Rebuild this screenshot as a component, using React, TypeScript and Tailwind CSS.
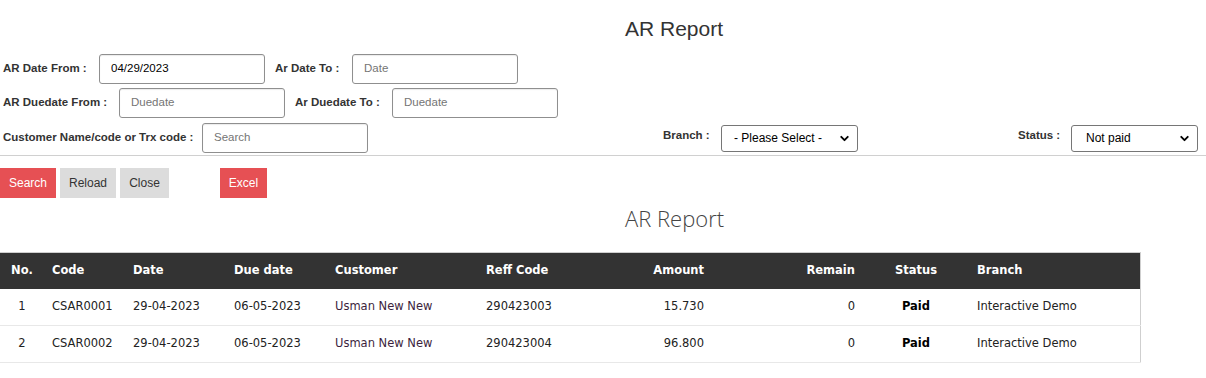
import { ChevronDown } from 'lucide-react';

const rows = [
    { no: 1, code: 'CSAR0001', date: '29-04-2023', due: '06-05-2023', customer: 'Usman New New', reff: '290423003', amount: '15.730', remain: '0', status: 'Paid', branch: 'Interactive Demo' },
    { no: 2, code: 'CSAR0002', date: '29-04-2023', due: '06-05-2023', customer: 'Usman New New', reff: '290423004', amount: '96.800', remain: '0', status: 'Paid', branch: 'Interactive Demo' },
];

function Label({ text, w }: { text: string; w: string }) {
    return <span className={`${w} shrink-0 text-[11.5px] font-bold text-[#333]`}>{text}</span>;
}

function Field({ value, placeholder }: { value?: string; placeholder?: string }) {
    return (
        <div className="w-[166px] h-[30px] shrink-0 rounded-[3px] border border-[#8f8f8f] bg-white px-[11px] flex items-center text-[11.5px] shadow-[inset_0_1px_1px_rgba(0,0,0,0.08)]">
            {value ? <span className="text-black">{value}</span> : <span className="text-[#757575]">{placeholder}</span>}
        </div>
    );
}

function Select({ value, w, center }: { value: string; w: string; center?: boolean }) {
    return (
        <div className={`${w} h-[27px] shrink-0 rounded-[3px] border border-[#767676] bg-white flex items-center pr-[6px] text-[12px] text-black`}>
            <span className={center ? 'flex-1 pl-[12px]' : 'flex-1 pl-[14px]'}>{value}</span>
            <ChevronDown size={13} strokeWidth={3.5} className="text-black" />
        </div>
    );
}

export default function App() {
    return (
        <div className="w-[1206px] h-[378px] bg-white overflow-hidden font-['Liberation_Sans',Arial,sans-serif]">
            <div className="pt-[17px] pl-[625px] h-[54px] text-[21px] leading-[24px] text-[#333]">AR Report</div>

            {/* Filters */}
            <div className="flex flex-col pl-[3px]">
                <div className="flex items-center h-[30px]">
                    <Label text="AR Date From :" w="w-[96px]" />
                    <Field value="04/29/2023" />
                    <span className="w-[10px]" />
                    <Label text="Ar Date To :" w="w-[77px]" />
                    <Field placeholder="Date" />
                </div>
                <div className="flex items-center h-[30px] mt-[4px]">
                    <Label text="AR Duedate From :" w="w-[116px]" />
                    <Field placeholder="Duedate" />
                    <span className="w-[10px]" />
                    <Label text="Ar Duedate To :" w="w-[97px]" />
                    <Field placeholder="Duedate" />
                </div>
                <div className="flex items-center h-[30px] mt-[5px]">
                    <Label text="Customer Name/code or Trx code :" w="w-[199px]" />
                    <Field placeholder="Search" />
                    <span className="w-[295px]" />
                    <span className="w-[58px] text-[11.5px] font-bold text-[#333] -mt-[4px]">Branch :</span>
                    <Select value="- Please Select -" w="w-[137px]" center />
                    <span className="w-[160px]" />
                    <span className="w-[53px] text-[11.5px] font-bold text-[#333] -mt-[4px]">Status :</span>
                    <Select value="Not paid" w="w-[127px]" />
                </div>
            </div>

            <div className="mt-[2px] border-t border-[#d0d0d0]" />

            {/* Actions */}
            <div className="flex mt-[12px] text-[12px]">
                <button className="h-[30px] w-[56px] bg-[#e65054] text-white">Search</button>
                <button className="h-[30px] w-[56px] ml-[4px] bg-[#dcdcdc] text-[#333]">Reload</button>
                <button className="h-[30px] w-[49px] ml-[4px] bg-[#dcdcdc] text-[#333]">Close</button>
                <button className="h-[30px] w-[47px] ml-[51px] bg-[#e65054] text-white">Excel</button>
            </div>

            <div className="pl-[625px] mt-[9px] h-[45px] pt-[1px] text-[22px] leading-[20px] font-light text-[#444] font-['Open_Sans',sans-serif]">AR Report</div>

            {/* Table */}
            <table className="w-[1140px] table-fixed border-collapse border-t border-r border-[#cfcfcf] font-['DejaVu_Sans',Verdana,sans-serif] text-[11.5px]">
                <colgroup>
                    <col className="w-[42px]" />
                    <col className="w-[81px]" />
                    <col className="w-[101px]" />
                    <col className="w-[101px]" />
                    <col className="w-[151px]" />
                    <col className="w-[110px]" />
                    <col className="w-[128px]" />
                    <col className="w-[151px]" />
                    <col className="w-[102px]" />
                    <col className="w-[173px]" />
                </colgroup>
                <thead>
                    <tr className="h-[36px] bg-[#333] text-white font-bold">
                        <th className="text-center pl-[2px]">No.</th>
                        <th className="text-left px-[10px]">Code</th>
                        <th className="text-left px-[10px]">Date</th>
                        <th className="text-left px-[10px]">Due date</th>
                        <th className="text-left px-[10px]">Customer</th>
                        <th className="text-left px-[10px]">Reff Code</th>
                        <th className="text-right px-[10px]">Amount</th>
                        <th className="text-right px-[10px]">Remain</th>
                        <th className="text-center px-[10px]">Status</th>
                        <th className="text-left px-[10px]">Branch</th>
                    </tr>
                </thead>
                <tbody className="text-[#222]">
                    {rows.map((r) => (
                        <tr key={r.no} className="h-[37px] border-b border-[#e8e8e8]">
                            <td className="text-center pl-[2px]">{r.no}</td>
                            <td className="px-[10px]">{r.code}</td>
                            <td className="px-[10px]">{r.date}</td>
                            <td className="px-[10px]">{r.due}</td>
                            <td className="px-[10px] text-[#3d1f3d]">{r.customer}</td>
                            <td className="px-[10px]">{r.reff}</td>
                            <td className="px-[10px] text-right">{r.amount}</td>
                            <td className="px-[10px] text-right">{r.remain}</td>
                            <td className="px-[10px] text-center font-bold text-black">{r.status}</td>
                            <td className="px-[10px]">{r.branch}</td>
                        </tr>
                    ))}
                </tbody>
            </table>
        </div>
    );
}
